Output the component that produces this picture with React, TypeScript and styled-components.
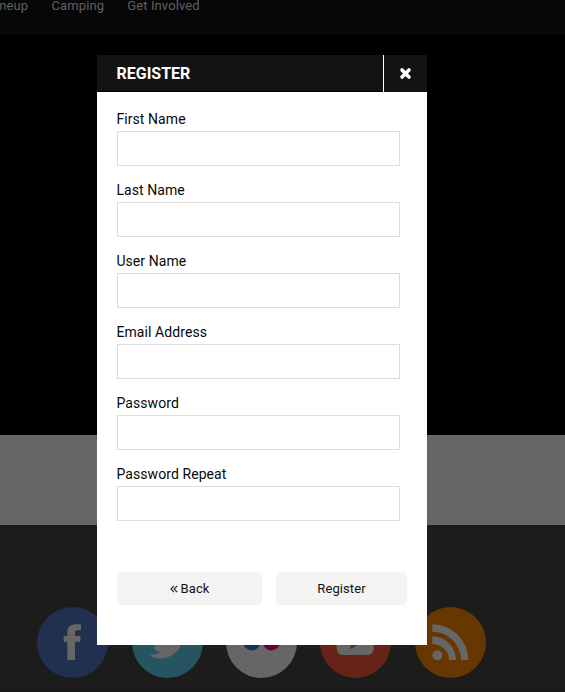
import React from "react";
import styled, { createGlobalStyle } from "styled-components";

const GlobalStyle = createGlobalStyle`
  * { box-sizing: border-box; }
  body { margin: 0; background: #1c1c1c; overflow: hidden; }
  body, button, input { font-family: Roboto, "Liberation Sans", sans-serif; }
`;

const Page = styled.div`
  position: relative;
  width: 565px;
  height: 692px;
  overflow: hidden;
  display: flex;
  flex-direction: column;
  background: #1c1c1c;
`;

const TopBar = styled.nav`
  height: 35px;
  flex: none;
  display: flex;
  gap: 23.3px;
  margin-left: -20px;
  padding-left: 9px;
  background: #070707;
`;

const NavLink = styled.a`
  font-size: 13px;
  line-height: 12px;
  letter-spacing: 0.09px;
  color: #606060;
  white-space: nowrap;
`;

const Hero = styled.div`
  height: 400px;
  flex: none;
  background: #000;
`;

const Band = styled.div`
  height: 90px;
  flex: none;
  background: #666;
`;

const Footer = styled.footer`
  flex: 1;
  display: grid;
  grid-template-columns: 95px 94px 94px 95px 71px;
  align-items: start;
  padding: 82px 0 0 37px;
  border-bottom: 1px solid #191617;
`;

const Social = styled.a<{ $color: string }>`
  width: 71px;
  height: 71px;
  border-radius: 50%;
  background: ${(p) => p.$color};
  svg { display: block; }
`;

const Modal = styled.section`
  position: absolute;
  top: 55px;
  left: 97px;
  width: 330px;
  height: 590px;
  background: #fff;
`;

const ModalHeader = styled.header`
  display: flex;
  height: 37px;
`;

const Title = styled.h2`
  flex: 1;
  margin: 0;
  padding-left: 19.5px;
  font-size: 16px;
  font-weight: 700;
  line-height: 37px;
  letter-spacing: 0;
  color: #fff;
  background: #131313;
  border-bottom: 1px solid #000;
`;

const Close = styled.button`
  width: 44px;
  padding: 0;
  border: 0;
  border-left: 1px solid #fff;
  background: #131313;
  display: flex;
  align-items: center;
  justify-content: center;
`;

const Form = styled.form`
  padding: 18px 20px 0 20px;
`;

const Field = styled.label`
  display: block;
  height: 71px;
`;

const FieldName = styled.span`
  display: block;
  height: 21px;
  margin-left: -0.6px;
  font-size: 14px;
  line-height: 18px;
  letter-spacing: 0.08px;
  color: #080808;
`;

const Input = styled.input`
  display: block;
  width: 283px;
  height: 35px;
  border: 1px solid #dcdcdc;
  background: #fff;
  outline: none;
`;

const Actions = styled.div`
  display: flex;
  gap: 14px;
  margin-top: 36px;
`;

const Button = styled.button<{ $width: number }>`
  width: ${(p) => p.$width}px;
  height: 33px;
  padding: 0;
  border: 0;
  border-radius: 5px;
  background: #f3f3f1;
  color: #111;
  font-size: 13px;
  letter-spacing: 0.1px;
  display: flex;
  align-items: center;
  justify-content: center;
  gap: 3px;
`;

const fields = ["First Name", "Last Name", "User Name", "Email Address", "Password", "Password Repeat"];

const Icon = ({ children }: { children: React.ReactNode }) => (
  <svg width="71" height="71" viewBox="0 0 71 71" fill="#666">{children}</svg>
);

export default function App() {
  return (
    <>
      <GlobalStyle />
      <Page>
        <TopBar>
          <NavLink>Lineup</NavLink>
          <NavLink>Camping</NavLink>
          <NavLink>Get Involved</NavLink>
        </TopBar>
        <Hero />
        <Band />
        <Footer>
          <Social $color="#21304f">
            <Icon>
              <path d="M30.3 53V34.7H26.7V29H30.3V26.5C30.3 20.2 33 17.3 38.8 17.3H44V23.2H40.8C38.6 23.2 38 24 38 26V29H43.7L43.1 34.7H38V53Z" />
            </Icon>
          </Social>
          <Social $color="#265461">
            <Icon>
              <path
                transform="translate(17.3 17.9) scale(1.54)"
                d="M23.953 4.57a10 10 0 0 1-2.825.775 4.958 4.958 0 0 0 2.163-2.723 9.99 9.99 0 0 1-3.127 1.184 4.92 4.92 0 0 0-8.384 4.482C7.69 8.095 4.067 6.13 1.64 3.162a4.822 4.822 0 0 0-.666 2.475c0 1.71.87 3.213 2.188 4.096a4.904 4.904 0 0 1-2.228-.616v.06a4.923 4.923 0 0 0 3.946 4.827 4.996 4.996 0 0 1-2.212.085 4.936 4.936 0 0 0 4.604 3.417 9.867 9.867 0 0 1-6.102 2.105c-.39 0-.779-.023-1.17-.067a13.995 13.995 0 0 0 7.557 2.209c9.053 0 13.998-7.496 13.998-13.985 0-.21 0-.42-.015-.63A9.935 9.935 0 0 0 24 4.59z"
              />
            </Icon>
          </Social>
          <Social $color="#666">
            <Icon>
              <circle cx="25.7" cy="34.7" r="8.7" fill="#182f5c" />
              <circle cx="45.3" cy="34.7" r="8.7" fill="#660038" />
            </Icon>
          </Social>
          <Social $color="#662318">
            <Icon>
              <rect x="16.7" y="22" width="37" height="26" rx="6" />
              <path d="M30.7 29V42L41.8 35.5Z" fill="#662318" />
            </Icon>
          </Social>
          <Social $color="#663700">
            <Icon>
              <circle cx="22.3" cy="48.3" r="5" />
              <path d="M17.3 17.3A36 35.7 0 0 1 53.3 53H46A28.7 28.3 0 0 0 17.3 24.7Z" />
              <path d="M17.3 29.3A23.7 23.7 0 0 1 41 53H34A16.7 16 0 0 0 17.3 37Z" />
            </Icon>
          </Social>
        </Footer>
        <Modal>
          <ModalHeader>
            <Title>REGISTER</Title>
            <Close type="button" aria-label="Close">
              <svg width="13" height="13" viewBox="0 0 13 13" stroke="#fff" strokeWidth="3.6" strokeLinecap="round">
                <path d="M3 3L10 10M10 3L3 10" />
              </svg>
            </Close>
          </ModalHeader>
          <Form>
            {fields.map((name) => (
              <Field key={name}>
                <FieldName>{name}</FieldName>
                <Input type={name.startsWith("Password") ? "password" : "text"} />
              </Field>
            ))}
            <Actions>
              <Button type="button" $width={145}>
                <svg width="8" height="8" viewBox="0 0 8 8" fill="none" stroke="#222" strokeWidth="1.1">
                  <path d="M4 0.8L0.9 4L4 7.2M7.2 0.8L4.1 4L7.2 7.2" />
                </svg>
                Back
              </Button>
              <Button type="button" $width={131}>Register</Button>
            </Actions>
          </Form>
        </Modal>
      </Page>
    </>
  );
}
